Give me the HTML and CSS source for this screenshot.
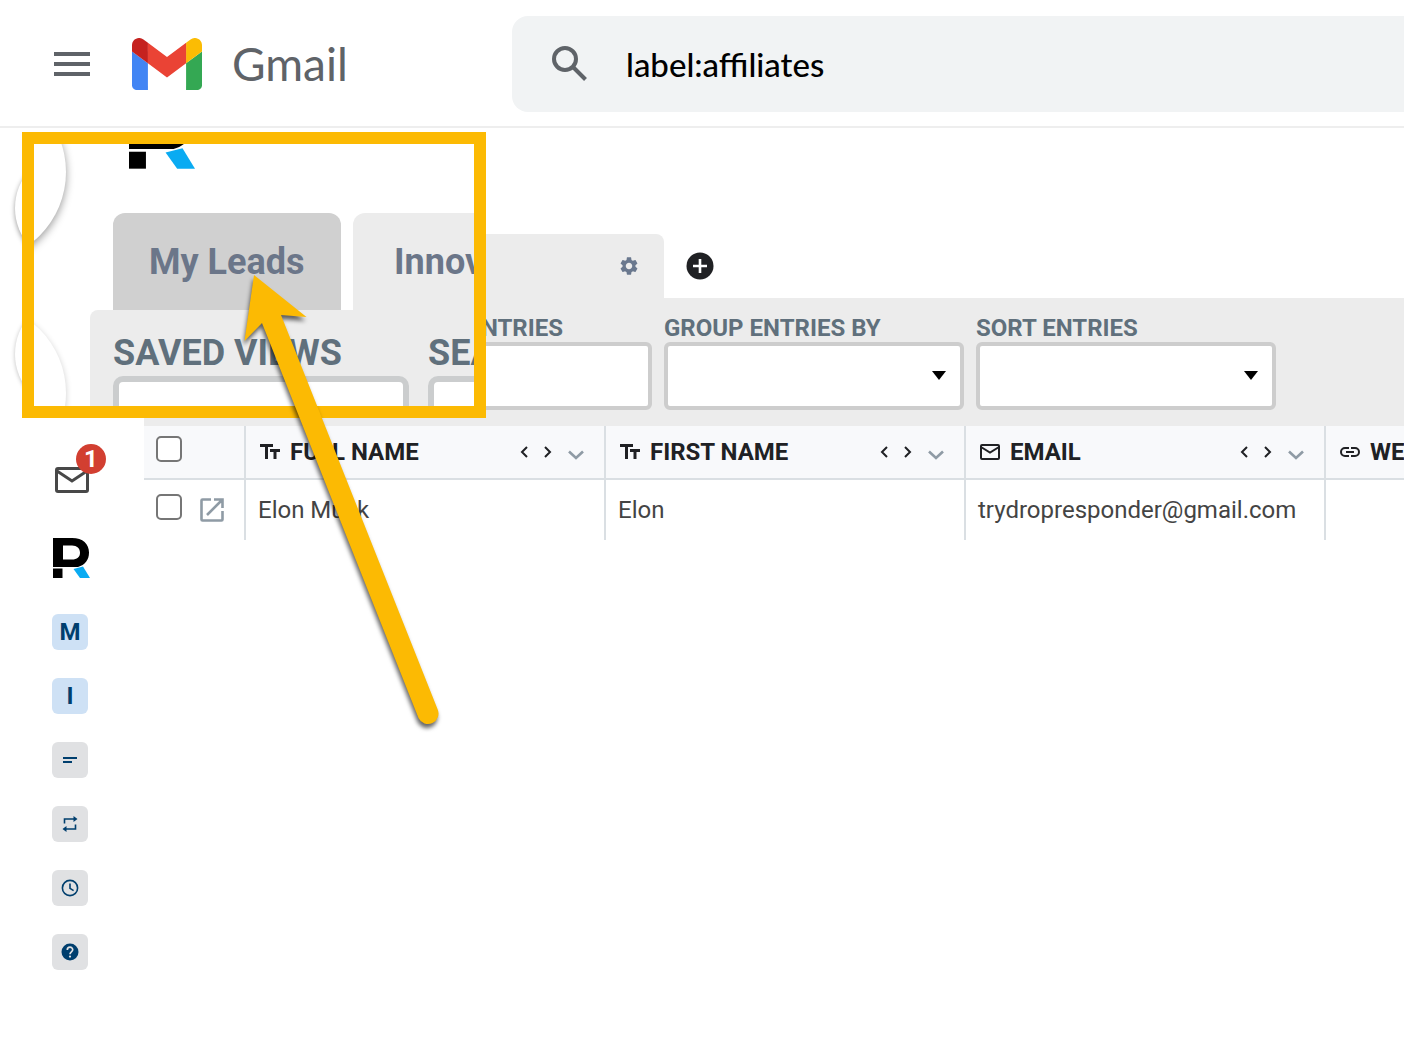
FILE: index.html
```html
<!DOCTYPE html>
<html lang="en">
<head>
<meta charset="utf-8">
<title>Gmail</title>
<link rel="stylesheet" href="styles.css">
</head>
<body>
<svg class="defs" aria-hidden="true">
  <symbol id="r-logo" viewBox="0 0 37 40">
    <path fill="#000" fill-rule="evenodd" d="M0 0H19C30 0 36 6 36 14.500C36 22 32 27 25 29H0ZM10 7.500V21.500H19C24 21.500 27 19 27 14.700C27 10.500 24 7.500 19 7.500Z"/>
    <path fill="#000" d="M0 30.500H9.500V40H0Z"/>
    <path fill="#0aabf2" d="M20.500 31L30 28.500L37 40H27Z"/>
  </symbol>
  <symbol id="text-type" viewBox="0 0 20 16">
    <path fill="currentColor" d="M0 0H13V3H8V15H5V3H0ZM10 5H20V8H16.500V15H13.500V8H10Z"/>
  </symbol>
  <symbol id="prev" viewBox="0 0 8 12"><path d="M7 1L2 6L7 11" fill="none" stroke="currentColor" stroke-width="2"/></symbol>
  <symbol id="next" viewBox="0 0 8 12"><path d="M1 1L6 6L1 11" fill="none" stroke="currentColor" stroke-width="2"/></symbol>
  <symbol id="down" viewBox="0 0 16 10"><path d="M1 1.500L8 8L15 1.500" fill="none" stroke="#8f9ba5" stroke-width="2.600"/></symbol>
</svg>

<header class="topbar">
  <button class="icon-button menu" aria-label="Main menu">
    <svg width="36" height="24" viewBox="0 0 36 24"><path fill="#5f6368" d="M0 0H36V4H0ZM0 10H36V14H0ZM0 20H36V24H0Z"/></svg>
  </button>
  <a class="brand" href="#">
    <svg width="70" height="52" viewBox="52 42 88 66" preserveAspectRatio="none">
      <path fill="#4285f4" d="M58 108h14V74L52 59v43c0 3.320 2.690 6 6 6"/>
      <path fill="#34a853" d="M120 108h14c3.320 0 6-2.690 6-6V59l-20 15"/>
      <path fill="#fbbc04" d="M120 48v26l20-15v-8c0-7.420-8.470-11.650-14.400-7.200"/>
      <path fill="#ea4335" d="M72 74V48l24 18 24-18v26L96 92"/>
      <path fill="#c5221f" d="M52 51v8l20 15V48l-5.600-4.200c-5.940-4.450-14.400-.22-14.400 7.200"/>
    </svg>
    <span class="brand-name">Gmail</span>
  </a>
  <form class="search">
    <button class="icon-button" type="button" aria-label="Search">
      <svg width="36" height="36" viewBox="0 0 36 36"><g fill="none" stroke="#5f6368" stroke-width="4"><circle cx="13" cy="13" r="11"/><path d="M21 21L33.500 33.500"/></g></svg>
    </button>
    <input class="search-input" type="text" value="label:affiliates" aria-label="Search mail">
  </form>
</header>

<div class="layout">
  <nav class="sidebar">
    <div class="round strong"></div>
    <div class="round"></div>
    <a class="mail" href="#" aria-label="Inbox">
      <svg width="34" height="26" viewBox="0 0 34 26"><g fill="none" stroke="#484848" stroke-width="3"><rect x="1.500" y="1.500" width="31" height="23" rx="1.500"/><path d="M2 4L17 14L32 4"/></g></svg>
      <span class="badge">1</span>
    </a>
    <a class="r-link" href="#" aria-label="Home"><svg width="37" height="40"><use href="#r-logo"/></svg></a>
    <div class="tiles">
      <button class="tile blue">M</button>
      <button class="tile blue">I</button>
      <button class="tile" aria-label="Notes"><svg width="14" height="6" viewBox="0 0 14 6"><path fill="#003f6e" d="M0 0H14V2H0ZM0 4H9V6H0Z"/></svg></button>
      <button class="tile" aria-label="Sequences"><svg width="16" height="16" viewBox="0 0 16 16"><path fill="none" stroke="#003f6e" stroke-width="1.600" d="M2.500 7.500V3H12M13.500 8.500V13H4"/><path fill="#003f6e" d="M11.500 0L15.500 3L11.500 6ZM4.500 10L.5 13L4.500 16Z"/></svg></button>
      <button class="tile" aria-label="Scheduled"><svg width="18" height="18" viewBox="0 0 18 18"><g fill="none" stroke="#003f6e" stroke-width="1.600"><circle cx="9" cy="9" r="7.600"/><path d="M9 4.500V9.300L12.600 11.600"/></g></svg></button>
      <button class="tile" aria-label="Help"><svg width="18" height="18" viewBox="0 0 18 18"><circle cx="9" cy="9" r="8.500" fill="#003f6e"/><path d="M6.300 7C6.300 3.200 11.700 3.200 11.700 6.800C11.700 8.800 9 9 9 11.200" fill="none" stroke="#e0e1e3" stroke-width="1.700"/><circle cx="9" cy="13.600" r="1.100" fill="#e0e1e3"/></svg></button>
    </div>
  </nav>

  <main class="main">
    <div class="tabs">
      <div class="tab">
        <button class="icon-button" aria-label="Tab settings">
          <svg width="18" height="18" viewBox="2.500 2 19 20"><path fill="#6a788e" d="M19.140 12.940c.04-.3.060-.61.060-.94 0-.32-.02-.64-.07-.94l2.030-1.580c.18-.14.23-.41.120-.61l-1.920-3.320c-.12-.22-.37-.29-.59-.22l-2.390.96c-.5-.38-1.030-.7-1.620-.94l-.36-2.540c-.04-.24-.24-.41-.48-.41h-3.840c-.24 0-.43.170-.47.410l-.36 2.540c-.59.240-1.130.570-1.620.940l-2.390-.96c-.22-.08-.47 0-.59.220L2.740 8.870c-.12.210-.08.470.120.610l2.030 1.580c-.05.300-.09.630-.09.940s.02.640.070.940l-2.030 1.580c-.18.140-.23.410-.12.610l1.920 3.320c.12.220.370.290.590.220l2.390-.96c.5.380 1.030.7 1.620.940l.36 2.540c.05.240.240.410.480.410h3.840c.24 0 .44-.17.470-.41l.36-2.540c.59-.24 1.130-.56 1.620-.94l2.390.96c.22.080.470 0 .59-.22l1.920-3.320c.12-.22.070-.47-.12-.61zM12 15.600c-1.980 0-3.600-1.620-3.600-3.600s1.620-3.600 3.600-3.600 3.600 1.620 3.600 3.600-1.620 3.600-3.600 3.600z"/></svg>
        </button>
      </div>
      <button class="icon-button" aria-label="Add tab">
        <svg width="28" height="28" viewBox="0 0 28 28"><circle cx="14" cy="14" r="13.500" fill="#202124"/><path d="M7 14H21M14 7V21" stroke="#fff" stroke-width="2.600"/></svg>
      </button>
    </div>

    <div class="toolbar">
      <div class="field">
        <label class="inset" for="search-entries">SEARCH ENTRIES</label>
        <input id="search-entries" class="control" type="text">
      </div>
      <div class="field">
        <label for="group">GROUP ENTRIES BY</label>
        <div class="select-box">
          <select id="group" class="control"><option></option></select>
          <svg class="caret" width="14" height="9" viewBox="0 0 14 9"><path d="M0 0H14L7 9Z"/></svg>
        </div>
      </div>
      <div class="field">
        <label for="sort">SORT ENTRIES</label>
        <div class="select-box">
          <select id="sort" class="control"><option></option></select>
          <svg class="caret" width="14" height="9" viewBox="0 0 14 9"><path d="M0 0H14L7 9Z"/></svg>
        </div>
      </div>
    </div>

    <table class="entries">
      <colgroup><col class="col-pick"><col class="col-data"><col class="col-data"><col class="col-data"><col></colgroup>
      <thead>
        <tr>
          <th><div class="pick"><input type="checkbox" aria-label="Select all"></div></th>
          <th><div class="head">
            <svg width="20" height="16"><use href="#text-type"/></svg><span>FULL NAME</span>
            <div class="moves">
              <button class="icon-button" aria-label="Move left"><svg width="8" height="12"><use href="#prev"/></svg></button>
              <button class="icon-button" aria-label="Move right"><svg width="8" height="12"><use href="#next"/></svg></button>
              <button class="icon-button drop" aria-label="Column menu"><svg width="16" height="10"><use href="#down"/></svg></button>
            </div></div></th>
          <th><div class="head">
            <svg width="20" height="16"><use href="#text-type"/></svg><span>FIRST NAME</span>
            <div class="moves">
              <button class="icon-button" aria-label="Move left"><svg width="8" height="12"><use href="#prev"/></svg></button>
              <button class="icon-button" aria-label="Move right"><svg width="8" height="12"><use href="#next"/></svg></button>
              <button class="icon-button drop" aria-label="Column menu"><svg width="16" height="10"><use href="#down"/></svg></button>
            </div></div></th>
          <th><div class="head">
            <svg width="20" height="16" viewBox="0 0 20 16"><g fill="none" stroke="#202124" stroke-width="2"><rect x="1" y="1" width="18" height="14" rx="1"/><path d="M1 3L10 8.500L19 3"/></g></svg><span>EMAIL</span>
            <div class="moves">
              <button class="icon-button" aria-label="Move left"><svg width="8" height="12"><use href="#prev"/></svg></button>
              <button class="icon-button" aria-label="Move right"><svg width="8" height="12"><use href="#next"/></svg></button>
              <button class="icon-button drop" aria-label="Column menu"><svg width="16" height="10"><use href="#down"/></svg></button>
            </div></div></th>
          <th><div class="head">
            <svg width="20" height="10" viewBox="0 0 20 10"><path d="M9 1H5A4 4 0 0 0 5 9H9M11 1H15A4 4 0 0 1 15 9H11M6 5H14" fill="none" stroke="#202124" stroke-width="2"/></svg><span>WEBSITE</span></div></th>
        </tr>
      </thead>
      <tbody>
        <tr>
          <td><div class="pick">
            <input type="checkbox" aria-label="Select Elon Musk">
            <a class="open" href="#" aria-label="Open entry"><svg width="24" height="24" viewBox="0 0 24 24"><path d="M11 1.500H2.500Q1.500 1.500 1.500 2.500V21.500Q1.500 22.500 2.500 22.500H21.500Q22.500 22.500 22.500 21.500V13M14 1.500H22.500V10M22 2L7 17" fill="none" stroke="#8f9ba5" stroke-width="2.600"/></svg></a>
          </div></td>
          <td>Elon Musk</td>
          <td>Elon</td>
          <td>trydropresponder@gmail.com</td>
          <td></td>
        </tr>
      </tbody>
    </table>
  </main>
</div>

<section class="zoom" aria-label="Close-up of tabs">
  <div class="zoom-round strong"></div>
  <div class="zoom-round lower"></div>
  <svg class="zoom-logo" width="66" height="72"><use href="#r-logo"/></svg>
  <div class="zoom-tabs">
    <button class="zoom-tab selected">My Leads</button>
    <button class="zoom-tab">Innov</button>
  </div>
  <div class="zoom-panel">
    <div class="zoom-field">
      <label for="saved-views">SAVED VIEWS</label>
      <select id="saved-views" class="zoom-control"><option></option></select>
    </div>
    <div class="zoom-field">
      <label for="zoom-search">SEARCH</label>
      <input id="zoom-search" class="zoom-control" type="text">
    </div>
  </div>
</section>

<svg class="pointer" width="236" height="480" viewBox="226 266 236 480" aria-hidden="true">
  <path fill="#fcba03" d="M254 275L306.500 317L281 315L437.500 709A10 10 0 0 1 418.500 718L262 323L244.500 341Z"/>
</svg>
</body>
</html>
```
FILE: styles.css
```css
* { box-sizing: border-box; }
body {
  position: relative;
  margin: 0;
  min-height: 100vh;
  background: #fff;
  overflow-x: hidden;
  font-family: Roboto, "Liberation Sans", sans-serif;
  color: #202124;
}
svg { display: block; flex: none; }
.defs { position: absolute; width: 0; height: 0; }
button { font-family: inherit; border: 0; padding: 0; }
.icon-button { background: none; color: inherit; }

.topbar {
  display: flex;
  align-items: center;
  height: 128px;
  border-bottom: 2px solid #eee;
  padding: 2px 0 0 54px;
}
.menu { margin-right: 42px; }
.brand {
  display: flex;
  align-items: center;
  gap: 30px;
  width: 380px;
  flex: none;
  color: #5f6368;
  text-decoration: none;
}
.brand-name { font: 46px/52px Lato, sans-serif; }
.search {
  display: flex;
  align-items: center;
  flex: 1;
  gap: 36px;
  height: 96px;
  padding-left: 40px;
  border-radius: 16px 0 0 16px;
  background: #f1f3f4;
}
.search-input {
  flex: 1;
  min-width: 0;
  border: 0;
  padding: 2px;
  background: none;
  color: #000;
  font: 500 33px/40px Lato, sans-serif;
}

.layout { display: flex; }
.sidebar {
  display: flex;
  flex-direction: column;
  align-items: center;
  flex: none;
  width: 140px;
  margin-right: 4px;
  padding-top: 24px;
}
.round {
  width: 110px;
  height: 112px;
  margin-bottom: 34px;
  border-radius: 50%;
  box-shadow: 0 1px 4px rgba(0, 0, 0, .25);
}
.round.strong { box-shadow: 0 2px 5px rgba(0, 0, 0, .4); }
.mail {
  position: relative;
  width: 34px;
  height: 54px;
  padding-top: 23px;
  margin: 0 0 40px 4px;
}
.badge {
  position: absolute;
  top: 0;
  left: 21px;
  width: 30px;
  border-radius: 50%;
  background: #d23f31;
  color: #fff;
  font-size: 24px;
  font-weight: 700;
  line-height: 30px;
  text-align: center;
}
.r-link { margin: 0 0 36px 2px; }
.tiles { display: flex; flex-direction: column; gap: 28px; }
.tile {
  display: flex;
  align-items: center;
  justify-content: center;
  width: 36px;
  height: 36px;
  border-radius: 6px;
  background: #e0e1e3;
}
.blue { background: #cee1f5; color: #003f6e; font-size: 24px; font-weight: 700; }

.main { flex: 1; min-width: 0; padding-top: 106px; }
.tabs { display: flex; align-items: center; gap: 22px; padding-left: 164px; }
.tab {
  display: flex;
  align-items: center;
  justify-content: flex-end;
  width: 356px;
  height: 64px;
  padding-right: 26px;
  border-radius: 8px 8px 0 0;
  background: #ececec;
}
.toolbar {
  display: flex;
  gap: 12px;
  padding: 16px 16px 16px 208px;
  background: #ececec;
}
.field { flex: 0 1 300px; min-width: 0; white-space: nowrap; }
.field label {
  display: block;
  color: #60707c;
  font-size: 24px;
  font-weight: 700;
  line-height: 28px;
}
.field .inset { padding-left: 17px; }
.control {
  display: block;
  width: 100%;
  height: 68px;
  border: 4px solid #cdcdcd;
  border-radius: 6px;
  background: #fff;
  appearance: none;
}
.select-box { position: relative; }
.caret { position: absolute; right: 18px; top: 29px; pointer-events: none; }

.entries {
  width: 100%;
  min-width: 1320px;
  table-layout: fixed;
  border-spacing: 0;
  font-size: 24px;
  line-height: 28px;
  white-space: nowrap;
}
.col-pick { width: 100px; }
.col-data { width: 360px; }
th, td { padding: 0; text-align: left; }
th {
  height: 54px;
  background: #f8f9fb;
  border-bottom: 2px solid #dadfe3;
}
td { height: 60px; padding-left: 12px; color: #444; }
td:first-child { padding: 0; }
th + th, td + td { border-left: 2px solid #dadfe3; }
.head {
  display: flex;
  align-items: center;
  gap: 10px;
  padding: 0 20px 0 14px;
}
.moves { display: flex; align-items: center; gap: 16px; margin-left: auto; }
.drop { padding-top: 6px; }
.pick { display: flex; align-items: center; gap: 18px; padding-left: 12px; }
.pick input {
  appearance: none;
  width: 26px;
  height: 26px;
  margin: 0 0 6px;
  border: 2px solid #767676;
  border-radius: 5px;
  background: #fff;
}

.zoom {
  position: absolute;
  top: 132px;
  left: 22px;
  width: 464px;
  height: 286px;
  border: 12px solid #fcba03;
  background: #fff;
  overflow: hidden;
}
.zoom-round {
  position: absolute;
  top: -62px;
  left: -148px;
  width: 180px;
  height: 180px;
  border-radius: 50%;
  box-shadow: 0 2px 6px rgba(0, 0, 0, .2);
}
.zoom-round.strong { box-shadow: 0 3px 8px rgba(0, 0, 0, .4); }
.zoom-round.lower { top: 159px; }
.zoom-logo { margin: -47px 0 44px 95px; }
.zoom-tabs { display: flex; gap: 12px; padding-left: 79px; }
.zoom-tab {
  flex: none;
  width: 228px;
  height: 97px;
  padding: 0 36px;
  border-radius: 12px 12px 0 0;
  background: #ececec;
  color: #6b7689;
  font-size: 36px;
  font-weight: 700;
  text-align: left;
  white-space: nowrap;
}
.zoom-tab + .zoom-tab { padding-left: 41px; }
.selected { background: #d0d0d0; }
.zoom-panel {
  display: flex;
  gap: 19px;
  width: 700px;
  height: 120px;
  margin-left: 56px;
  padding: 20px 23px;
  border-radius: 8px 0 0;
  background: #ececec;
}
.zoom-field { width: 296px; }
.zoom-field label {
  display: block;
  color: #60707c;
  font-size: 36px;
  font-weight: 700;
  line-height: 46px;
}
.zoom-control {
  display: block;
  width: 100%;
  height: 100px;
  border: 6px solid #cbcdce;
  border-radius: 10px;
  background: #fff;
  appearance: none;
}
.pointer {
  position: absolute;
  top: 266px;
  left: 226px;
  filter: drop-shadow(-1px 4px 2px rgba(0, 0, 0, .6));
  pointer-events: none;
}
```
